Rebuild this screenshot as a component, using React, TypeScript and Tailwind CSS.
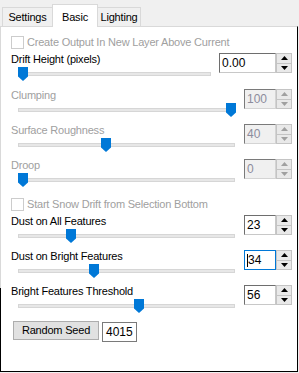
import React from "react";

type SliderRowProps = {
	label: string;
	value: string;
	pos: number;
	disabled?: boolean;
	focused?: boolean;
	wide?: boolean;
	className?: string;
};

function Arrow({ up, disabled }: { up: boolean; disabled?: boolean }) {
	return (
		<svg width="7" height="4" viewBox="0 0 7 4">
			<polygon
				points={up ? "0,4 7,4 3.5,0" : "0,0 7,0 3.5,4"}
				fill={disabled ? "#a0a0a0" : "#000"}
			/>
		</svg>
	);
}

function SpinBox({
	value,
	disabled,
	focused,
	wide,
}: {
	value: string;
	disabled?: boolean;
	focused?: boolean;
	wide?: boolean;
}) {
	return (
		<div className="flex h-[20px] shrink-0">
			<div
				className={`flex items-center h-full pl-[2px] text-[12px] border ${
					wide ? "w-[57px]" : "w-[32px]"
				} ${
					focused
						? "border-[#0078d7] bg-white text-black"
						: disabled
							? "border-t-[#7a7a7a] border-l-[#7a7a7a] border-b-[#d4d4d4] border-r-[#d4d4d4] bg-[#f0f0f0] text-[#8c8c9c]"
							: "border-t-[#6e6e6e] border-l-[#6e6e6e] border-b-[#c8c8c8] border-r-[#c8c8c8] bg-white text-black"
				}`}
			>
				{focused && <span className="w-px h-[13px] bg-black" />}
				<span>{value}</span>
			</div>
			<div className="flex flex-col w-[16px] h-full border border-[#c4c4c4] bg-[#f0f0f0]">
				<div className="flex-1 flex items-center justify-center border-b border-[#c4c4c4] bg-[#e9e9e9]">
					<Arrow up disabled={disabled} />
				</div>
				<div className="flex-1 flex items-center justify-center bg-[#e9e9e9]">
					<Arrow up={false} disabled={disabled} />
				</div>
			</div>
		</div>
	);
}

function SliderRow({
	label,
	value,
	pos,
	disabled,
	focused,
	wide,
	className = "h-[35px]",
}: SliderRowProps) {
	return (
		<div className={`flex ${wide ? "gap-[8px]" : "gap-[9px]"} ${className}`}>
			<div className="flex-1 flex flex-col">
				<div
					className={`h-[14px] leading-[14px] text-[11px] tracking-[-0.2px] ${
						disabled ? "text-[#a0a0a0]" : "text-black"
					}`}
				>
					{label}
				</div>
				<div className="relative ml-[7px] h-[15px]">
					<div className="absolute left-0 right-0 top-[6px] h-[4px] bg-[#e7e7e7] border border-[#d6d6d6]" />
					<svg
						width="10"
						height="14"
						viewBox="0 0 10 14"
						className="absolute top-[1px]"
						style={{ left: `calc((100% - 9px) * ${pos / 100})` }}
					>
						<polygon points="0,0 10,0 10,9.5 5,14 0,9.5" fill="#0078d7" />
					</svg>
				</div>
			</div>
			<div className="pt-[1px]">
				<SpinBox value={value} disabled={disabled} focused={focused} wide={wide} />
			</div>
		</div>
	);
}

function CheckRow({ label, className }: { label: string; className?: string }) {
	return (
		<div className={`flex items-center gap-[3px] h-[14px] ${className}`}>
			<div className="w-[13px] h-[13px] border border-[#cccccc] bg-white" />
			<span className="text-[11px] tracking-[-0.2px] text-[#a0a0a0]">{label}</span>
		</div>
	);
}

export default function App() {
	return (
		<div className="relative w-[299px] h-[373px] bg-[#f0f0f0] font-['Liberation_Sans',Arial,sans-serif] text-black">
			{/* Tabs */}
			<div className="flex items-end h-[26px] pl-[2px]">
				<div className="flex items-center justify-center w-[50px] h-[19px] border-t border-l border-[#d9d9d9] text-[11px] tracking-[-0.2px]">
					Settings
				</div>
				<div className="relative z-10 -mb-px flex items-start justify-center pt-[4px] w-[46px] h-[23px] bg-white border-t border-l border-r border-[#d9d9d9] text-[11px] tracking-[-0.2px]">
					Basic
				</div>
				<div className="flex items-center justify-center w-[43px] h-[19px] border-t border-r border-[#d9d9d9] text-[11px] tracking-[-0.2px]">
					Lighting
				</div>
			</div>

			{/* Panel */}
			<div className="w-[298px] h-[346px] bg-white border-t border-l border-t-[#d9d9d9] border-l-[#d9d9d9] border-r border-r-black border-b border-b-black pl-[10px] pr-[5px] flex flex-col">
				<CheckRow label="Create Output In New Layer Above Current" className="mt-[8px]" />
				<SliderRow
					label="Drift Height (pixels)"
					value="0.00"
					pos={0}
					wide
					className="mt-[3px] h-[36px]"
				/>
				<SliderRow label="Clumping" value="100" pos={100} disabled />
				<SliderRow label="Surface Roughness" value="40" pos={40} disabled />
				<SliderRow label="Droop" value="0" pos={0} disabled />
				<CheckRow label="Start Snow Drift from Selection Bottom" className="mt-[4px]" />
				<SliderRow label="Dust on All Features" value="23" pos={23} className="mt-[3px] h-[35px]" />
				<SliderRow label="Dust on Bright Features" value="34" pos={34} focused />
				<SliderRow label="Bright Features Threshold" value="56" pos={56} />
				<div className="flex items-start gap-[3px] mt-[2px] ml-[2px]">
					<button className="w-[86px] h-[19px] bg-[#e1e1e1] border border-[#adadad] text-[11px] tracking-[-0.2px] text-black">
						Random Seed
					</button>
					<div className="flex items-center w-[35px] h-[20px] mt-px pl-[3px] border border-[#7a7a7a] bg-white text-[12px]">
						4015
					</div>
				</div>
			</div>

			{/* window edge */}
			<div className="absolute left-0 top-[288px] bottom-[1px] w-px bg-black" />
		</div>
	);
}
